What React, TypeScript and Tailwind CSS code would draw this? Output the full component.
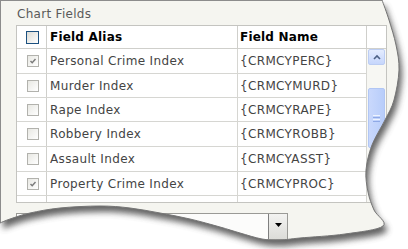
import React from 'react';

type Row = { alias: string; name: string; checked?: boolean; h: string };

const rows: Row[] = [
  { alias: 'Personal Crime Index', name: '{CRMCYPERC}', checked: true, h: 'h-[25px]' },
  { alias: 'Murder Index', name: '{CRMCYMURD}', h: 'h-[24px]' },
  { alias: 'Rape Index', name: '{CRMCYRAPE}', h: 'h-[24px]' },
  { alias: 'Robbery Index', name: '{CRMCYROBB}', h: 'h-[25px]' },
  { alias: 'Assault Index', name: '{CRMCYASST}', h: 'h-[25px]' },
  { alias: 'Property Crime Index', name: '{CRMCYPROC}', checked: true, h: 'h-[24px]' },
  // next row only peeks in under the grid's bottom edge
  { alias: '', name: '', h: 'h-[24px]' },
];

// torn edge of the screenshot, right side then bottom
const edgePts: number[][] = [
  [382, 0], [389, 20], [396, 45], [399, 70], [394, 100], [385, 120], [372, 145],
  [366, 170], [368, 192], [374, 210], [383, 226], [345, 234], [300, 238],
  [280, 240], [262, 239], [240, 233], [220, 227], [190, 219], [160, 213],
  [130, 208], [100, 206], [60, 208], [30, 213], [10, 219], [0, 223],
];

function smooth(pts: number[][]) {
  let d = `M${pts[0][0]},${pts[0][1]}`;
  for (let i = 0; i < pts.length - 1; i++) {
    const p0 = pts[i - 1] || pts[i];
    const p1 = pts[i];
    const p2 = pts[i + 1];
    const p3 = pts[i + 2] || p2;
    const c1 = [p1[0] + (p2[0] - p0[0]) / 6, p1[1] + (p2[1] - p0[1]) / 6];
    const c2 = [p2[0] - (p3[0] - p1[0]) / 6, p2[1] - (p3[1] - p1[1]) / 6];
    d += ` C${c1[0].toFixed(1)},${c1[1].toFixed(1)} ${c2[0].toFixed(1)},${c2[1].toFixed(1)} ${p2[0]},${p2[1]}`;
  }
  return d;
}

const edge = smooth(edgePts);
const paper = `M0,0 L${edge.slice(1)} Z`;
const outside = `M0,0 H408 V249 H0 Z ${paper}`;

function Check({ checked }: { checked?: boolean }) {
  return (
    <div className="w-[12px] h-[12px] border border-[#b2b2ad] bg-gradient-to-br from-[#e8e8e3] to-white flex items-center justify-center">
      {checked && (
        <svg width="8" height="8" viewBox="0 0 8 8">
          <path d="M1.5 4 L3.2 5.8 L6.5 2" fill="none" stroke="#7a7a7a" strokeWidth="1.4" />
        </svg>
      )}
    </div>
  );
}

function TornEdge() {
  return (
    <svg className="absolute inset-0" width="408" height="249">
      <defs>
        <filter id="soft" x="-20%" y="-20%" width="140%" height="140%">
          <feGaussianBlur stdDeviation="3" />
        </filter>
        <clipPath id="out">
          <path d={outside} clipRule="evenodd" />
        </clipPath>
      </defs>
      <path d={outside} fill="#ffffff" fillRule="evenodd" />
      <g clipPath="url(#out)">
        <path d={paper} transform="translate(3,6)" fill="#4a4a4a" opacity="0.85" filter="url(#soft)" />
      </g>
      <path d={edge} fill="none" stroke="#767676" strokeWidth="1" />
    </svg>
  );
}

export default function App() {
  return (
    <div className="relative w-[408px] h-[249px] bg-white overflow-hidden" style={{ fontFamily: '"DejaVu Sans", Verdana, sans-serif' }}>
      <div className="w-full h-full bg-[#f5f5f0] border-l border-t border-[#8c8c8c] pl-[15px] pt-[5px]">
        <div className="text-[12px] leading-[16px] text-[#5a5a5a] pl-[1px] tracking-[0.3px]">Chart Fields</div>

        {/* grid */}
        <div className="mt-[3px] w-[371px] h-[178px] border border-[#c4c4c0] bg-white flex overflow-hidden">
          <div className="w-[350px] flex flex-col">
            <div className="h-[23px] shrink-0 flex border-b border-[#cfcfcb] text-[12px] font-bold text-black tracking-[0.2px]">
              <div className="w-[30px] border-r border-[#cfcfcb] flex items-center justify-center pl-[2px]">
                <div className="w-[13px] h-[13px] border border-[#1c5180] bg-gradient-to-br from-[#dcdcd6] to-white" />
              </div>
              <div className="w-[191px] border-r border-[#cfcfcb] flex items-center pl-[3px]">Field Alias</div>
              <div className="w-[129px] border-r border-[#cfcfcb] flex items-center pl-[2px]">Field Name</div>
            </div>
            {rows.map((r, i) => (
              <div key={i} className={`${r.h} shrink-0 flex border-b border-[#d6d6d2] text-[12px] text-[#444] tracking-[0.35px]`}>
                <div className="w-[30px] border-r border-[#cfcfcb] flex items-center justify-center pl-[2px]">
                  {r.alias && <Check checked={r.checked} />}
                </div>
                <div className="w-[191px] border-r border-[#d6d6d2] flex items-center pl-[3px]">{r.alias}</div>
                <div className="w-[129px] border-r border-[#d6d6d2] flex items-center pl-[2px]">{r.name}</div>
              </div>
            ))}
          </div>

          {/* scroll column */}
          <div className="w-[19px] flex flex-col">
            <div className="h-[23px] shrink-0 border-b border-[#cfcfcb]" />
            <div className="flex-1 bg-[#f7f7f3] pl-[1px]">
              <div className="w-[17px] h-[16px] rounded-[2px] border border-[#bccdf3] bg-gradient-to-b from-[#e4ecfe] to-[#c6d6fc] flex items-center justify-center">
                <svg width="8" height="6" viewBox="0 0 8 6">
                  <path d="M1 5 L4 2 L7 5" fill="none" stroke="#4d6185" strokeWidth="1.6" />
                </svg>
              </div>
              <div className="h-[23px]" />
              <div className="w-[17px] h-[60px] rounded-[2px] border border-[#b1c6f4] bg-gradient-to-r from-[#c9d8fc] to-[#b8cdfa] flex flex-col items-center justify-center gap-[1px]">
                <div className="w-[7px] h-[1px] bg-[#eef3fe]" />
                <div className="w-[7px] h-[1px] bg-[#8fa9e6]" />
                <div className="w-[7px] h-[1px] bg-[#eef3fe]" />
                <div className="w-[7px] h-[1px] bg-[#8fa9e6]" />
              </div>
            </div>
          </div>
        </div>

        {/* dropdown */}
        <div className="mt-[10px] w-[272px] h-[27px] border border-[#9a9a96] bg-[#fcfcfb] flex justify-end">
          <div className="w-[19px] h-full border-l border-[#7f7f7f] bg-gradient-to-b from-[#f3f3f1] to-[#dcdcd8] flex justify-center pt-[9px]">
            <svg width="7" height="4" viewBox="0 0 7 4">
              <path d="M0 0 H7 L3.5 4 Z" fill="#000" />
            </svg>
          </div>
        </div>
      </div>
      <TornEdge />
    </div>
  );
}
